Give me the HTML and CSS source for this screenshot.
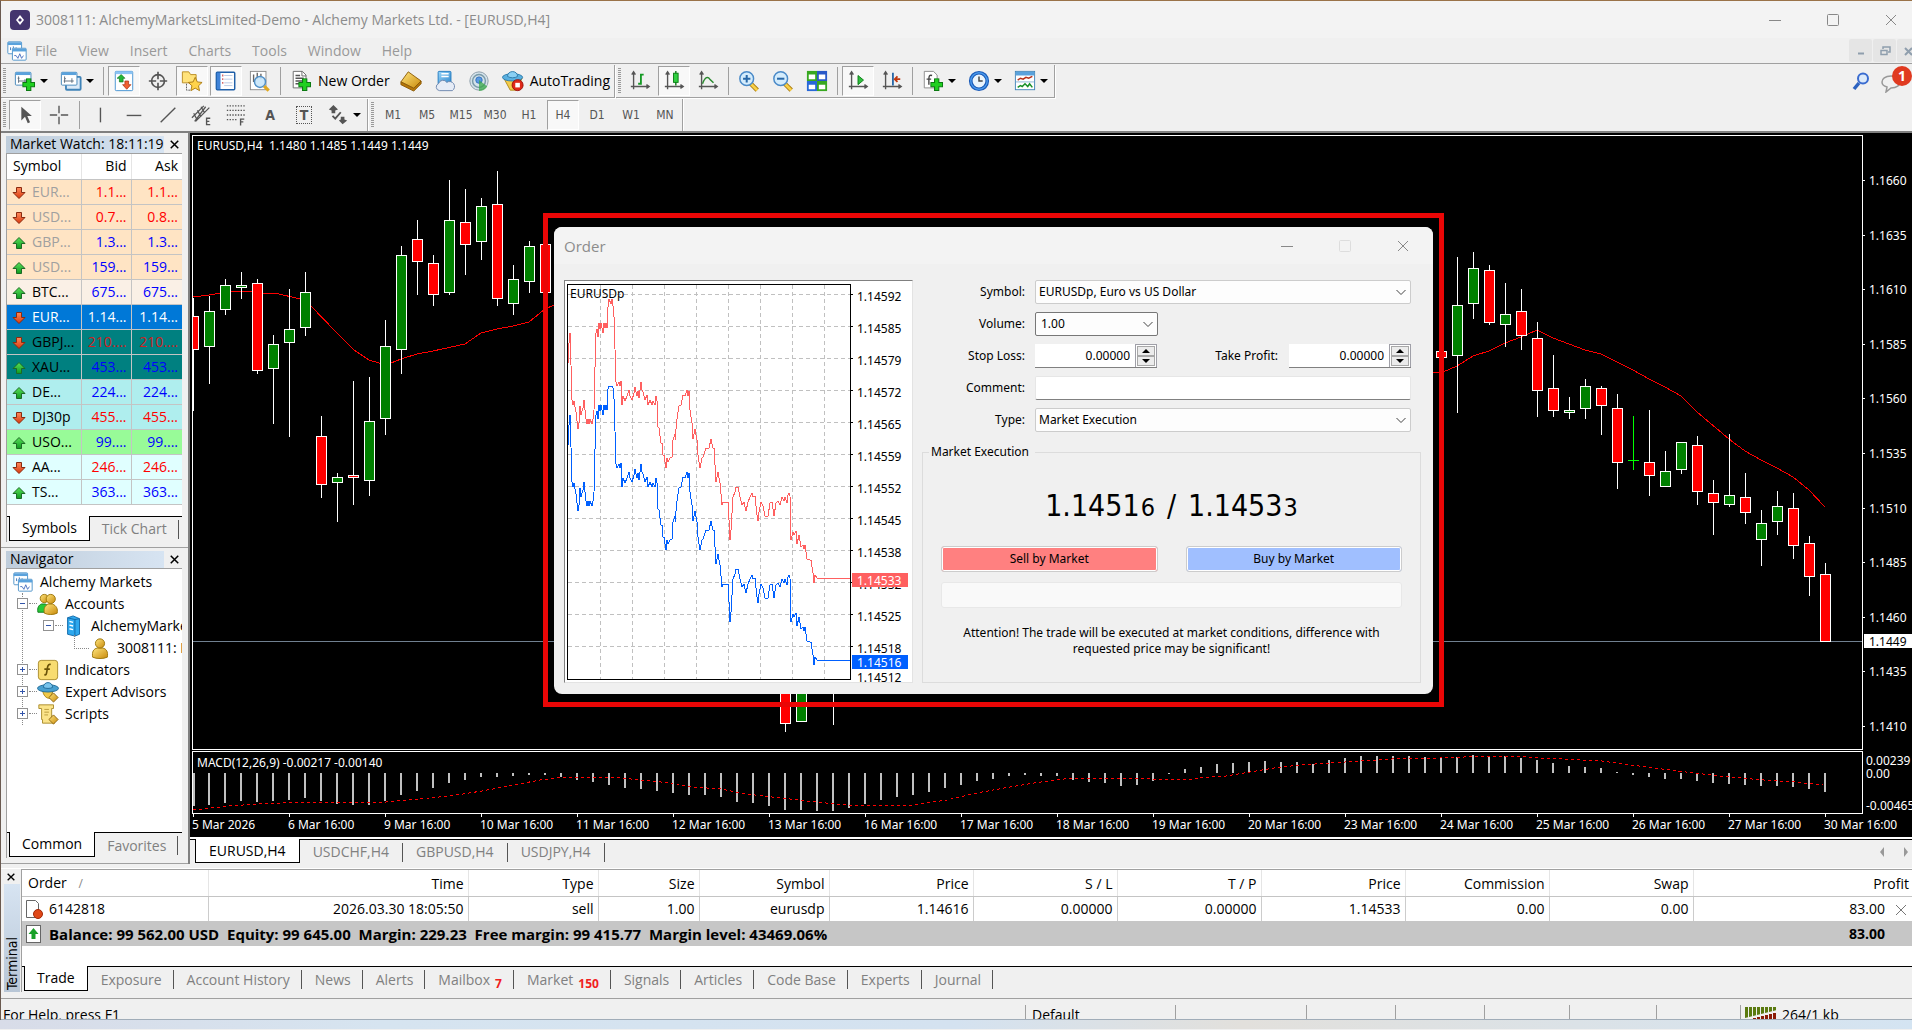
FILE: index.html
```html
<!DOCTYPE html>
<html lang="en">
<head>
<meta charset="utf-8">
<title>3008111: AlchemyMarketsLimited-Demo</title>
<link rel="stylesheet" href="styles.css">
</head>
<body>
<svg class="sprite" aria-hidden="true">
  <defs>
    <linearGradient id="g-red" x1="0" y1="0" x2="0" y2="1"><stop offset="0" stop-color="#ff8a5c"/><stop offset="1" stop-color="#d8380c"/></linearGradient>
    <linearGradient id="g-green" x1="0" y1="0" x2="0" y2="1"><stop offset="0" stop-color="#5be05b"/><stop offset="1" stop-color="#0f9a1f"/></linearGradient>
    <linearGradient id="g-gold" x1="0" y1="0" x2="1" y2="1"><stop offset="0" stop-color="#ffe680"/><stop offset="1" stop-color="#c98a0a"/></linearGradient>
    <linearGradient id="g-blue" x1="0" y1="0" x2="1" y2="1"><stop offset="0" stop-color="#9bd8fb"/><stop offset="1" stop-color="#2f86cc"/></linearGradient>
  </defs>
  <symbol id="down" viewBox="0 0 14 14"><path d="M4.500 1.500h5v5h3.500l-6 6-6-6h3.500z" fill="url(#g-red)" stroke="#8a2a10"/></symbol>
  <symbol id="up" viewBox="0 0 14 14"><path d="M4.500 12.500h5v-5h3.500l-6-6-6 6h3.500z" fill="url(#g-green)" stroke="#1c6a24"/></symbol>
  <symbol id="plus" viewBox="0 0 12 12"><path d="M4 .500h4v3.500h3.500v4h-3.500v3.500h-4v-3.500h-3.500v-4h3.500z" fill="#20d020" stroke="#0b7a12"/></symbol>
  <symbol id="charts" viewBox="0 0 24 24"><rect x="2" y="2" width="15" height="13" rx="1" fill="#fff" stroke="#4a90c8"/><path d="M2 4h15" stroke="#5aa2dc" stroke-width="3"/><path d="M5 8v3m3-4v4m3-3v2" stroke="#336fb8"/><rect x="7" y="9" width="15" height="13" rx="1" fill="#fff" stroke="#4a90c8"/><path d="M7 11h15" stroke="#5aa2dc" stroke-width="3"/><path d="M9 17h2l2 3 2-5 2 5 2-3" fill="none" stroke="#4870c0"/></symbol>
  <symbol id="newchart" viewBox="0 0 24 24"><rect x="1.500" y="2.500" width="17" height="14" rx="1" fill="#fff" stroke="#3f83b8"/><path d="M2 4h16" stroke="#5aa2dc" stroke-width="3"/><path d="M5 7v7m-1-5h2m-1 3h9m-2-2v4" stroke="#5a6a78" fill="none"/><use href="#plus" x="9" y="9" width="14" height="14"/></symbol>
  <symbol id="profiles" viewBox="0 0 24 24"><rect x="6.500" y="7.500" width="16" height="14" rx="1" fill="#dbeaf8" stroke="#3f83b8" stroke-width="2"/><rect x="1.500" y="2.500" width="17" height="14" rx="1" fill="#fff" stroke="#3f83b8"/><path d="M2 4h16" stroke="#5aa2dc" stroke-width="3"/><path d="M5 7v7m-1-2h11m-9-3v1m7-1v5" stroke="#5a6a78" fill="none"/></symbol>
  <symbol id="mwatch" viewBox="0 0 24 24"><rect x="2.500" y="1.500" width="19" height="21" rx="1" fill="#fff" stroke="#3f8fd0"/><path d="M3 3h18" stroke="#8cc4f4" stroke-width="3"/><path d="M7 13V9H4.500L9 5l4 4h-2v4z" fill="#22b838" stroke="#137a22" stroke-width=".8"/><path d="M13 12v4h-2.500l4.500 5 4.500-5H17v-4z" fill="#f06030" stroke="#a83010" stroke-width=".8"/></symbol>
  <symbol id="target" viewBox="0 0 24 24"><circle cx="12" cy="12" r="7" fill="none" stroke="#555" stroke-width="1.800"/><path d="M12 2v8m0 4v8M2 12h8m4 0h8" stroke="#555" stroke-width="1.800"/></symbol>
  <symbol id="star" viewBox="0 0 24 24"><path d="M1.500 2h7l2 3h6v9h-15z" fill="#ffe27a" stroke="#b88a20"/><path d="M6 15v7h5" fill="none" stroke="#555" stroke-dasharray="2 1"/><path d="M15.500 8l2.300 5 5.200.6-3.900 3.600 1.100 5.300-4.700-2.700-4.700 2.700 1.100-5.300L8 13.600l5.200-.6z" fill="#ffd34a" stroke="#a87810"/></symbol>
  <symbol id="terminal" viewBox="0 0 24 24"><rect x="1.500" y="2.500" width="20" height="19" rx="1" fill="#fff" stroke="#1f5fa8" stroke-width="1.600"/><path d="M4 3v18" stroke="#3f83d8" stroke-width="4"/><path d="M8 6h1m-1 4h1m-1 4h1" stroke="#c02020" stroke-width="2"/><path d="M10 6h9m-9 4h9m-9 4h9m-9 3h9" stroke="#b8c8e4"/></symbol>
  <symbol id="tester" viewBox="0 0 24 24"><rect x="1.500" y="1.500" width="17" height="20" fill="#fff" stroke="#888"/><path d="M5 5v8m4-10v7m4-6v6" stroke="#666" stroke-width="1.500"/><circle cx="12" cy="13" r="6" fill="#c8e6fa" fill-opacity=".9" stroke="#5090c8" stroke-width="1.600"/><path d="M16.500 17.500l5 5" stroke="#e0a820" stroke-width="3.500"/></symbol>
  <symbol id="neworder" viewBox="0 0 24 24"><path d="M3.500 1.500h10l4 4v14h-14z" fill="#fff" stroke="#666"/><path d="M13 1.500v5h4.500" fill="none" stroke="#666"/><path d="M6 6h5m-5 3h9m-9 3h9m-9 3h4" stroke="#555" stroke-width="1.500"/><use href="#plus" x="9" y="9" width="14" height="14"/></symbol>
  <symbol id="gold" viewBox="0 0 24 24"><path d="M9 2l14 10-8 8L1 13z" fill="url(#g-gold)" stroke="#8a5a08"/><path d="M1 13l14 7 8-8v3l-8 8L1 16z" fill="#b87808" stroke="#8a5a08"/></symbol>
  <symbol id="vps" viewBox="0 0 24 24"><rect x="4.500" y="1.500" width="14" height="14" rx="1" fill="url(#g-blue)" stroke="#1f78c0"/><path d="M8 4h8m-8 3h8" stroke="#fff" stroke-width="1.600"/><path d="M6 22.500a4 4 0 0 1-1-7.700 5 5 0 0 1 9-1.300 4.500 4.500 0 0 1 6 9z" fill="#e6ecf6" stroke="#6a84ac"/></symbol>
  <symbol id="signals" viewBox="0 0 24 24"><circle cx="12" cy="12" r="10" fill="#d4e2ea" stroke="#8a9aa6"/><circle cx="12" cy="12" r="7" fill="none" stroke="#7a9aa8" stroke-width="1.600"/><circle cx="12" cy="11" r="3.500" fill="#5a9ae0" stroke="#3070c0"/><path d="M12 11v12a11 11 0 0 0 9-5z" fill="#38a848" opacity=".75"/></symbol>
  <symbol id="autotrade" viewBox="0 0 24 24"><path d="M2 9l7 13h6l7-13z" fill="#f4cc4a" stroke="#b08818"/><ellipse cx="11.500" cy="8" rx="11" ry="4" fill="#5ab0e0" stroke="#2a78a8"/><path d="M6 7c0-7 11-7 11 0-3 2-8 2-11 0z" fill="#8ad0f4" stroke="#2a78a8"/><circle cx="17" cy="16.500" r="6" fill="#e02818" stroke="#981008"/><rect x="14.500" y="14" width="5" height="5" fill="#fff"/></symbol>
  <symbol id="axes" viewBox="0 0 24 24"><path d="M5 3v18m-3-3h19M3 5l2-3 2 3M19 16l3 2-3 2" fill="none" stroke="#555" stroke-width="1.500"/></symbol>
  <symbol id="bars" viewBox="0 0 24 24"><use href="#axes"/><path d="M10 15h3V5h3" fill="none" stroke="#159a25" stroke-width="2"/></symbol>
  <symbol id="candle" viewBox="0 0 24 24"><use href="#axes"/><path d="M14 1v16" stroke="#0a7a14" stroke-width="1.500"/><rect x="11.500" y="3.500" width="5" height="10" fill="#2fd040" stroke="#0a7a14"/></symbol>
  <symbol id="line" viewBox="0 0 24 24"><use href="#axes"/><path d="M6 15c3-8 6-8 8-5l4 4" fill="none" stroke="#2a8a30" stroke-width="1.600"/></symbol>
  <symbol id="lens" viewBox="0 0 24 24"><path d="M14 15l7 7" stroke="#a87808" stroke-width="5"/><path d="M14 15l7 7" stroke="#f8d048" stroke-width="3"/><circle cx="9.500" cy="9.500" r="7.500" fill="#d4ecfc" stroke="#4a8ac8" stroke-width="1.600"/></symbol>
  <symbol id="zoomin" viewBox="0 0 24 24"><use href="#lens"/><path d="M5.500 9.500h8m-4-4v8" stroke="#2868a8" stroke-width="2.200"/></symbol>
  <symbol id="zoomout" viewBox="0 0 24 24"><use href="#lens"/><path d="M5.500 9.500h8" stroke="#2868a8" stroke-width="2.200"/></symbol>
  <symbol id="tile" viewBox="0 0 24 24"><path d="M1 1h11v11H1z" fill="#38a820"/><path d="M12 1h11v11H12z" fill="#2858c8"/><path d="M1 12h11v11H1z" fill="#2868d8"/><path d="M12 12h11v11H12z" fill="#38a820"/><path d="M3 5h7v5H3zM14 5h7v5h-7zM3 16h7v5H3zM14 16h7v5h-7z" fill="#fff"/></symbol>
  <symbol id="scroll" viewBox="0 0 24 24"><use href="#axes"/><path d="M12 6l6 5-6 5z" fill="#2fc03f" stroke="#0a7a14"/></symbol>
  <symbol id="shift" viewBox="0 0 24 24"><use href="#axes"/><path d="M13 3v14" stroke="#2868a8" stroke-width="2"/><path d="M15 10h6m-3-3l-3 3 3 3" fill="none" stroke="#c03810" stroke-width="2"/></symbol>
  <symbol id="indic" viewBox="0 0 24 24"><path d="M2.500 1.500h10l4 4v14h-14z" fill="#fff" stroke="#888"/><path d="M11 6c-3-1-3.500 1-3.500 4v6M5 10h5" fill="none" stroke="#444" stroke-width="1.500"/><use href="#plus" x="9" y="9" width="14" height="14"/></symbol>
  <symbol id="clock" viewBox="0 0 24 24"><circle cx="12" cy="12" r="9" fill="#eaf4fc" stroke="#1a5ab8" stroke-width="4"/><circle cx="12" cy="12" r="9" fill="none" stroke="#4a9aec" stroke-width="1.500"/><path d="M12 7v5h4" fill="none" stroke="#444" stroke-width="1.600"/></symbol>
  <symbol id="template" viewBox="0 0 24 24"><rect x="1.500" y="1.500" width="21" height="20" fill="#fff" stroke="#3f83b8"/><path d="M2 4h20" stroke="#5aa2dc" stroke-width="4"/><path d="M4 11l3-2 3 1 3-2 3 1 4-2" fill="none" stroke="#b83018" stroke-width="1.600"/><path d="M2 13h20" stroke="#8ab4d4"/><path d="M4 19l3-2 2 1 3-3 3 3 2-3 3 4" fill="none" stroke="#189028" stroke-width="1.600"/></symbol>
  <symbol id="cursor" viewBox="0 0 24 24"><path d="M8 3v15l4-4 3 7 2.500-1-3-7h5z" fill="#555"/></symbol>
  <symbol id="cross" viewBox="0 0 24 24"><path d="M12 2v8m0 4v8M2 12h8m4 0h8" stroke="#555" stroke-width="1.500"/></symbol>
  <symbol id="vline" viewBox="0 0 24 24"><path d="M12.500 4v16" stroke="#555" stroke-width="1.500"/></symbol>
  <symbol id="hline" viewBox="0 0 24 24"><path d="M4 12.500h16" stroke="#555" stroke-width="1.500"/></symbol>
  <symbol id="trend" viewBox="0 0 24 24"><path d="M4 20L20 4" stroke="#555" stroke-width="1.500"/></symbol>
  <symbol id="channel" viewBox="0 0 24 24"><path d="M1 15L14 2M5 19L20 4M3 10l3 6m1-9l4 7m0-11l4 7M4 19L16 3" stroke="#555" stroke-width="1.400"/><path d="M21 15.500h-4v7h4m-4-3.500h3" fill="none" stroke="#555" stroke-width="1.500"/></symbol>
  <symbol id="fibo" viewBox="0 0 24 24"><path d="M2 2h20M2 7h20M2 12h20M2 17h12" stroke="#555" stroke-width="1.500" stroke-dasharray="1.500 1.500"/><path d="M21 16.500h-4v7m0-4h3" fill="none" stroke="#555" stroke-width="1.500"/></symbol>
  <symbol id="shapes" viewBox="0 0 24 24"><path d="M7 1l5 5-3 1v3H5V7L2 6zM17 22l-4-4 2-1v-3h4v3l3 1z" fill="#555"/><path d="M6 13l3 3 6-7" fill="none" stroke="#555" stroke-width="2"/></symbol>
  <symbol id="person" viewBox="0 0 24 24"><path d="M4 22c-1-6 1-9 5-10h6c4 1 6 4 5 10-4 2-12 2-16 0z" fill="url(#g-gold)" stroke="#9a7408"/><circle cx="12" cy="7" r="5" fill="url(#g-gold)" stroke="#9a7408"/></symbol>
  <symbol id="people" viewBox="0 0 24 24"><path d="M1 21c-1-5 1-8 4-9h4c3 1 4 4 4 9z" fill="#28c838" stroke="#0f7a1c"/><circle cx="8" cy="6" r="4.500" fill="url(#g-gold)" stroke="#9a7408"/><path d="M8 22c-1-6 1-8 4-10h5c4 2 6 5 5 10-4 2-10 2-14 0z" fill="url(#g-gold)" stroke="#9a7408"/><circle cx="15" cy="6.500" r="5" fill="url(#g-gold)" stroke="#9a7408"/></symbol>
  <symbol id="server" viewBox="0 0 24 24"><path d="M5 3l6-2 7 3v17l-5 2-8-2z" fill="#2ea8ee" stroke="#0f68a8"/><path d="M5 3l8 2v18M13 5l5-1" fill="none" stroke="#0f68a8"/><path d="M7 7l4 1m-4 3l4 1m-4 3l4 1" stroke="#fff" stroke-width="1.500"/></symbol>
  <symbol id="func" viewBox="0 0 24 24"><rect x="1.500" y="1.500" width="21" height="21" rx="3" fill="#f8dc70" stroke="#a88a28"/><path d="M15 6c-3-1-3.500 2-4 6s-1 6-3 5M8 11h6" fill="none" stroke="#6a5208" stroke-width="1.800"/></symbol>
  <symbol id="expert" viewBox="0 0 24 24"><path d="M6 10c1 6 4 9 8 9l4-9z" fill="#f0c848" stroke="#a88010"/><ellipse cx="12" cy="8" rx="11.500" ry="4" fill="#48a0d0" stroke="#1f6a98"/><path d="M7 7c0-7 10-7 10 0-3 1.500-7 1.500-10 0z" fill="#78c4ec" stroke="#1f6a98"/><path d="M18 13l5 5-5 5-5-5z" fill="url(#g-gold)" stroke="#8a6008"/></symbol>
  <symbol id="scripts" viewBox="0 0 24 24"><path d="M2 2h16v4h-2v12h3v4H6v-4H5V6H2z" fill="#fbe48a" stroke="#a88a28"/><path d="M8 7h5m-5 3h5m-5 3h4" stroke="#b89838"/><path d="M18 13l5 5-5 5-5-5z" fill="url(#g-gold)" stroke="#8a6008"/></symbol>
  <symbol id="x" viewBox="0 0 12 12"><path d="M1 1l10 10M11 1L1 11" stroke="currentColor" fill="none"/></symbol>
  <symbol id="min" viewBox="0 0 12 12"><path d="M0 6.500h12" stroke="currentColor"/></symbol>
  <symbol id="max" viewBox="0 0 12 12"><rect x=".5" y=".5" width="11" height="11" rx="1" fill="none" stroke="currentColor"/></symbol>
  <symbol id="chev" viewBox="0 0 12 12"><path d="M1.500 4l4.500 4.500L10.500 4" fill="none" stroke="#444"/></symbol>
</svg>

<div class="window">
  <header class="titlebar">
    <svg class="app-icon" viewBox="0 0 20 20"><rect width="20" height="20" rx="4" fill="#43356e"/><path d="M10 5l4 5-4 5-4-5z" fill="#fff"/><path d="M10 8l2 2-2 2-2-2z" fill="#43356e"/></svg>
    <h1>3008111: AlchemyMarketsLimited-Demo - Alchemy Markets Ltd. - [EURUSD,H4]</h1>
    <div class="win-buttons">
      <button aria-label="Minimize"><svg><use href="#min"/></svg></button>
      <button aria-label="Maximize"><svg><use href="#max"/></svg></button>
      <button aria-label="Close"><svg><use href="#x"/></svg></button>
    </div>
  </header>

  <nav class="menubar">
    <svg class="menu-icon"><use href="#charts"/></svg>
    <button>File</button><button>View</button><button>Insert</button><button>Charts</button><button>Tools</button><button>Window</button><button>Help</button>
    <div class="mdi-buttons">
      <button aria-label="Minimize chart"><svg viewBox="0 0 12 12"><path d="M3 8.500h6" stroke="#8f9ead" stroke-width="2"/></svg></button>
      <button aria-label="Restore chart"><svg viewBox="0 0 12 12"><path d="M4 4V2h7v5H9M2 5.500h6v4H2z" fill="none" stroke="#8f9ead" stroke-width="1.500"/></svg></button>
      <button aria-label="Close chart"><svg viewBox="0 0 12 12"><path d="M2 3l7 7M9 3l-7 7" stroke="#8f9ead" stroke-width="2"/></svg></button>
    </div>
  </nav>

  <div class="toolbar">
    <div class="group framed">
      <i class="grip"></i>
      <button class="tool drop" aria-label="New chart"><svg><use href="#newchart"/></svg></button>
      <button class="tool drop" aria-label="Profiles"><svg><use href="#profiles"/></svg></button>
      <i class="sep"></i>
      <button class="tool on" aria-label="Market Watch"><svg><use href="#mwatch"/></svg></button>
      <button class="tool" aria-label="Data Window"><svg><use href="#target"/></svg></button>
      <button class="tool on" aria-label="Navigator"><svg><use href="#star"/></svg></button>
      <button class="tool on" aria-label="Terminal"><svg><use href="#terminal"/></svg></button>
      <button class="tool" aria-label="Strategy Tester"><svg><use href="#tester"/></svg></button>
      <i class="sep"></i>
      <button class="tool text"><svg><use href="#neworder"/></svg>New Order</button>
      <button class="tool" aria-label="MetaEditor"><svg><use href="#gold"/></svg></button>
      <button class="tool" aria-label="VPS"><svg><use href="#vps"/></svg></button>
      <button class="tool" aria-label="Signals"><svg><use href="#signals"/></svg></button>
      <button class="tool text"><svg><use href="#autotrade"/></svg>AutoTrading</button>
    </div>
    <div class="group framed">
      <i class="grip"></i>
      <button class="tool" aria-label="Bar chart"><svg><use href="#bars"/></svg></button>
      <button class="tool on" aria-label="Candlesticks"><svg><use href="#candle"/></svg></button>
      <button class="tool" aria-label="Line chart"><svg><use href="#line"/></svg></button>
      <i class="sep"></i>
      <button class="tool" aria-label="Zoom in"><svg><use href="#zoomin"/></svg></button>
      <button class="tool" aria-label="Zoom out"><svg><use href="#zoomout"/></svg></button>
      <button class="tool" aria-label="Tile windows"><svg><use href="#tile"/></svg></button>
      <i class="sep"></i>
      <button class="tool on" aria-label="Auto scroll"><svg><use href="#scroll"/></svg></button>
      <button class="tool" aria-label="Chart shift"><svg><use href="#shift"/></svg></button>
      <i class="sep"></i>
      <button class="tool drop" aria-label="Indicators"><svg><use href="#indic"/></svg></button>
      <button class="tool drop" aria-label="Periods"><svg><use href="#clock"/></svg></button>
      <button class="tool drop" aria-label="Templates"><svg><use href="#template"/></svg></button>
    </div>
    <div class="toolbar-end">
      <button aria-label="Search"><svg width="20" height="20" viewBox="0 0 20 20"><path d="M3 17l5-6" stroke="#2c62c0" stroke-width="3.500"/><circle cx="12" cy="6.500" r="5" fill="#dceafa" stroke="#3a6cd0" stroke-width="2"/></svg></button>
      <button class="chat" aria-label="Messages"><svg width="22" height="22" viewBox="0 0 22 22"><path d="M11 5c6 0 9 3 9 6s-3 6-9 6l-5 4 1-5c-4-1-5-3-5-5 0-3 3-6 9-6z" fill="#f0f0f0" stroke="#999" stroke-width="1.500"/></svg><span class="badge">1</span></button>
    </div>
  </div>

  <div class="toolbar second">
    <div class="group">
      <i class="grip"></i>
      <button class="tool on" aria-label="Cursor"><svg><use href="#cursor"/></svg></button>
      <button class="tool" aria-label="Crosshair"><svg><use href="#cross"/></svg></button>
      <i class="sep"></i>
      <button class="tool" aria-label="Vertical line"><svg><use href="#vline"/></svg></button>
      <button class="tool" aria-label="Horizontal line"><svg><use href="#hline"/></svg></button>
      <button class="tool" aria-label="Trendline"><svg><use href="#trend"/></svg></button>
      <button class="tool" aria-label="Channel"><svg><use href="#channel"/></svg></button>
      <button class="tool" aria-label="Fibonacci"><svg><use href="#fibo"/></svg></button>
      <button class="tool letter">A</button>
      <button class="tool letter" aria-label="Text label"><span class="boxed">T</span></button>
      <button class="tool drop" aria-label="Arrows"><svg><use href="#shapes"/></svg></button>
    </div>
    <div class="group">
      <i class="grip"></i>
      <button class="tool period">M1</button><button class="tool period">M5</button><button class="tool period">M15</button><button class="tool period">M30</button><button class="tool period">H1</button><button class="tool period on">H4</button><button class="tool period">D1</button><button class="tool period">W1</button><button class="tool period">MN</button>
    </div>
  </div>

  <main class="workspace">
    <aside class="side">
      <section class="panel">
        <div class="panel-title"><h2>Market Watch: 18:11:19</h2><button aria-label="Close Market Watch"><svg><use href="#x"/></svg></button></div>
        <div class="panel-body">
          <table class="quotes">
            <thead><tr><th>Symbol</th><th>Bid</th><th>Ask</th></tr></thead>
            <tbody>
              <tr class="bisque muted dn"><td><svg><use href="#down"/></svg>EUR...</td><td>1.1...</td><td>1.1...</td></tr>
              <tr class="bisque muted dn"><td><svg><use href="#down"/></svg>USD...</td><td>0.7...</td><td>0.8...</td></tr>
              <tr class="bisque muted"><td><svg><use href="#up"/></svg>GBP...</td><td>1.3...</td><td>1.3...</td></tr>
              <tr class="bisque muted"><td><svg><use href="#up"/></svg>USD...</td><td>159...</td><td>159...</td></tr>
              <tr class="linen"><td><svg><use href="#up"/></svg>BTC...</td><td>675...</td><td>675...</td></tr>
              <tr class="selected"><td><svg><use href="#down"/></svg>EUR...</td><td>1.14...</td><td>1.14...</td></tr>
              <tr class="teal dn"><td><svg><use href="#down"/></svg>GBPJ...</td><td>210....</td><td>210....</td></tr>
              <tr class="teal"><td><svg><use href="#up"/></svg>XAU...</td><td>453...</td><td>453...</td></tr>
              <tr class="turq"><td><svg><use href="#up"/></svg>DE...</td><td>224...</td><td>224...</td></tr>
              <tr class="turq dn"><td><svg><use href="#down"/></svg>DJ30p</td><td>455...</td><td>455...</td></tr>
              <tr class="palegreen"><td><svg><use href="#up"/></svg>USO...</td><td>99....</td><td>99....</td></tr>
              <tr class="cyan dn"><td><svg><use href="#down"/></svg>AA...</td><td>246...</td><td>246...</td></tr>
              <tr class="cyan"><td><svg><use href="#up"/></svg>TS...</td><td>363...</td><td>363...</td></tr>
            </tbody>
          </table>
          <div class="tabs"><button class="tab active">Symbols</button><button class="tab">Tick Chart</button></div>
        </div>
      </section>
      <section class="panel grow">
        <div class="panel-title"><h2>Navigator</h2><button aria-label="Close Navigator"><svg><use href="#x"/></svg></button></div>
        <div class="panel-body">
          <ul class="tree">
            <li class="l0"><svg><use href="#charts"/></svg>Alchemy Markets</li>
            <li class="l1"><b class="toggle minus"></b><svg><use href="#people"/></svg>Accounts</li>
            <li class="l2"><b class="toggle minus"></b><svg><use href="#server"/></svg>AlchemyMarketsLimited-Demo</li>
            <li class="l3"><svg><use href="#person"/></svg>3008111: Demo</li>
            <li class="l1"><b class="toggle"></b><svg><use href="#func"/></svg>Indicators</li>
            <li class="l1"><b class="toggle"></b><svg><use href="#expert"/></svg>Expert Advisors</li>
            <li class="l1"><b class="toggle"></b><svg><use href="#scripts"/></svg>Scripts</li>
          </ul>
          <div class="tabs"><button class="tab active">Common</button><button class="tab">Favorites</button></div>
        </div>
      </section>
    </aside>

    <section class="chart-pane">
      <svg class="chart" id="chart" role="img" aria-label="EURUSD H4 candlestick chart"></svg>
      <div class="tabs chart-tabs">
        <button class="tab active">EURUSD,H4</button><button class="tab">USDCHF,H4</button><button class="tab">GBPUSD,H4</button><button class="tab">USDJPY,H4</button>
        <svg class="tab-scroll" viewBox="0 0 32 12"><path d="M6 1v10L2 6zM26 1v10l4-5z" fill="#999"/></svg>
      </div>

      <div class="highlight"></div>
      <section class="dialog" role="dialog" aria-labelledby="dlg-title">
        <header class="dialog-title">
          <h2 id="dlg-title">Order</h2>
          <div class="win-buttons">
            <button aria-label="Minimize"><svg><use href="#min"/></svg></button>
            <button aria-label="Maximize" disabled><svg><use href="#max"/></svg></button>
            <button aria-label="Close"><svg><use href="#x"/></svg></button>
          </div>
        </header>
        <div class="dialog-body">
          <svg class="ticks" id="ticks" role="img" aria-label="EURUSDp tick chart"></svg>
          <form class="order">
            <div class="fields">
              <label for="symbol">Symbol:</label>
              <span class="select"><select id="symbol"><option>EURUSDp, Euro vs US Dollar</option></select><svg><use href="#chev"/></svg></span>
              <label for="volume">Volume:</label>
              <span class="select short"><select id="volume"><option>1.00</option></select><svg><use href="#chev"/></svg></span>
              <label for="sl">Stop Loss:</label>
              <div class="pair">
                <span class="spin"><input id="sl" type="text" value="0.00000"><span class="arrows"><button type="button" aria-label="Increase"></button><button type="button" class="dec" aria-label="Decrease"></button></span></span>
                <label for="tp">Take Profit:</label>
                <span class="spin"><input id="tp" type="text" value="0.00000"><span class="arrows"><button type="button" aria-label="Increase"></button><button type="button" class="dec" aria-label="Decrease"></button></span></span>
              </div>
              <label for="comment">Comment:</label>
              <input id="comment" class="line-input" type="text">
              <label for="type">Type:</label>
              <span class="select"><select id="type"><option>Market Execution</option></select><svg><use href="#chev"/></svg></span>
            </div>
            <fieldset>
              <legend>Market Execution</legend>
              <p class="price">1.1451<small>6</small><span class="slash">/</span>1.1453<small>3</small></p>
              <div class="deal"><button type="button" class="sell">Sell by Market</button><button type="button" class="buy">Buy by Market</button></div>
              <button type="button" class="blank" disabled aria-label="Close position"></button>
              <p class="note">Attention! The trade will be executed at market conditions, difference with requested price may be significant!</p>
            </fieldset>
          </form>
        </div>
      </section>
    </section>
  </main>

  <section class="terminal">
    <div class="terminal-side"><button aria-label="Close Terminal"><svg><use href="#x"/></svg></button><h2>Terminal</h2></div>
    <div class="terminal-main">
      <table class="trades">
        <colgroup><col class="c-order"><col class="c-time"><col class="c-type"><col class="c-size"><col class="c-symbol"><col class="c-num"><col class="c-num"><col class="c-num"><col class="c-num"><col class="c-num"><col class="c-num"><col></colgroup>
        <thead><tr><th>Order <span class="sort">/</span></th><th>Time</th><th>Type</th><th>Size</th><th>Symbol</th><th>Price</th><th>S / L</th><th>T / P</th><th>Price</th><th>Commission</th><th>Swap</th><th>Profit</th></tr></thead>
        <tbody>
          <tr><td><svg class="row-icon" viewBox="0 0 18 20"><path d="M1.500 1.500h9l3 3v14h-12z" fill="#fff" stroke="#666"/><circle cx="13" cy="15" r="4.500" fill="#e04818" stroke="#a02808"/></svg>6142818</td><td>2026.03.30 18:05:50</td><td>sell</td><td>1.00</td><td>eurusdp</td><td>1.14616</td><td>0.00000</td><td>0.00000</td><td>1.14533</td><td>0.00</td><td>0.00</td><td>83.00<button class="close-trade" aria-label="Close trade"><svg><use href="#x"/></svg></button></td></tr>
          <tr class="total"><td colspan="11"><svg class="row-icon" viewBox="0 0 18 20"><rect x="1.500" y="1.500" width="14" height="17" fill="#fff" stroke="#666"/><path d="M8.500 4l5 6h-3v5h-4v-5h-3z" fill="#18a028"/></svg>Balance: 99 562.00 USD&nbsp; Equity: 99 645.00&nbsp; Margin: 229.23&nbsp; Free margin: 99 415.77&nbsp; Margin level: 43469.06%</td><td>83.00</td></tr>
        </tbody>
      </table>
      <div class="tabs terminal-tabs">
        <button class="tab active">Trade</button><button class="tab">Exposure</button><button class="tab">Account History</button><button class="tab">News</button><button class="tab">Alerts</button><button class="tab">Mailbox<sub>7</sub></button><button class="tab">Market<sub>150</sub></button><button class="tab">Signals</button><button class="tab">Articles</button><button class="tab">Code Base</button><button class="tab">Experts</button><button class="tab">Journal</button>
      </div>
    </div>
  </section>

  <footer class="status">
    <span class="help">For Help, press F1</span><span>Default</span><span></span><span></span><span></span><span></span><span></span><span></span>
    <span class="traffic"><svg width="32" height="20" viewBox="0 0 32 20"><path d="M0 10h32" stroke="#5a7a10" stroke-width="20" stroke-dasharray="3 1"/><path d="M0 11L32 3v17H0z" fill="#f0f0f0"/><path d="M1.500 20v-7m4 7v-8m4 8v-9m4 9v-10m4 10v-11m4 11v-12m4 12v-13m4 13v-14" stroke="#8c1c08" stroke-width="3"/></svg>264/1 kb</span>
  </footer>
</div>
<div class="desktop"></div>
<script src="app.js"></script>
</body>
</html>
```
FILE: styles.css
```css
* { box-sizing: border-box; }

body {
  margin: 0;
  background: #f0f0f0;
  color: #000;
  font: 14px/20px "Open Sans", "Noto Sans", sans-serif;
  overflow-x: hidden;
}

h1, h2, p, ul { margin: 0; padding: 0; font-weight: 400; }
button, input, select { font: inherit; color: inherit; margin: 0; }
button { background: none; border: 0; padding: 0; }
svg { display: block; }
.sprite { position: absolute; width: 0; height: 0; }

.window { border-top: 1px solid #9a7248; border-left: 1px solid #6a5a50; overflow: hidden; }

/* Title bar and menu */
.titlebar { display: flex; align-items: center; height: 37px; padding-left: 9px; background: #f3f3f3; color: #8c8c8c; }
.titlebar h1 { flex: 1; margin-left: 6px; font-size: 14px; line-height: 36px; }
.app-icon { width: 20px; height: 20px; }
.win-buttons { display: flex; color: #888; }
.win-buttons button { width: 58px; height: 36px; display: grid; place-items: center; }
.win-buttons svg { width: 12px; height: 12px; }
.titlebar .win-buttons { margin-right: -8px; }

.menubar { display: flex; align-items: center; height: 27px; padding: 0 0 2px 5px; background: linear-gradient(#a0a0a0, #a0a0a0) 0 25px / 100% 1px no-repeat, #f0f0f0; color: #999; }
.menu-icon { width: 22px; height: 22px; }
.menubar > button { padding: 0 11px 0 10px; font-size: 14px; }
.menubar > .menu-icon + button { padding-left: 7px; }
.mdi-buttons { display: flex; gap: 1px; margin-left: auto; margin-right: -8px; }
.mdi-buttons button { width: 23px; height: 23px; border-radius: 2px; background: #e5e5e5; display: grid; place-items: center; }
.mdi-buttons svg { width: 12px; height: 12px; }

/* Toolbars */
.toolbar { display: flex; height: 34px; }
.toolbar.second { height: 34px; border-bottom: 2px solid #808080; }
.group { display: flex; align-items: center; padding: 0 0 0 2px; border-right: 1px solid #a0a0a0; box-shadow: 1px 0 #fff; margin-right: 1px; }
.group.framed { border-bottom: 1px solid #a0a0a0; height: 33px; box-shadow: 1px 1px #fff; }
.grip { width: 3px; height: 26px; margin-right: 2px; background: repeating-linear-gradient(#999 0 1px, #f0f0f0 1px 2px); }
.sep { width: 1px; height: 28px; margin: 0 3px; background: #a0a0a0; }
.tool { position: relative; width: 32px; height: 30px; margin: 0 1px; display: flex; align-items: center; justify-content: center; }
.tool svg { width: 22px; height: 22px; flex: none; }
.tool.on { border: 1px solid; border-color: #a0a0a0 #fff #fff #a0a0a0; background: #f8f8f8; }
.tool.drop { width: 44px; justify-content: flex-start; padding-left: 5px; }
.tool.drop::after { content: ""; margin-left: 4px; border: 4px solid transparent; border-top-color: #000; border-bottom: 0; }
.tool.text { width: auto; gap: 6px; padding: 0 3px 0 5px; white-space: nowrap; }
.tool.period, .tool.letter { color: #555; font: 12px/16px "DejaVu Sans Condensed", "DejaVu Sans", sans-serif; }
.tool.letter { font-size: 14px; font-weight: 700; }
.boxed { width: 16px; border: 1px dotted #555; }
.toolbar-end { display: flex; align-items: center; gap: 9px; margin-left: auto; padding-right: 10px; }
.chat { position: relative; }
.badge { position: absolute; left: 12px; top: -5px; width: 20px; height: 20px; border-radius: 10px; background: #e03a20; color: #fff; font-weight: 700; line-height: 20px; }

/* Side panels */
.workspace { display: grid; grid-template-columns: 189px minmax(0, 1fr); }
.side { display: flex; flex-direction: column; border-right: 2px solid #808080; }
.panel { display: flex; flex-direction: column; padding: 3px 6px 5px 5px; border-bottom: 1px solid #a0a0a0; }
.panel.grow { flex: 1; }
.panel-title { display: flex; justify-content: space-between; height: 17px; }
.panel-title h2 { width: 158px; padding-left: 4px; font-size: 14px; line-height: 16px; white-space: nowrap; background: linear-gradient(90deg, #bfcddb, #d7e4f2); }
.panel-title button { width: 16px; display: grid; place-items: center; }
.panel-title svg { width: 9px; height: 9px; stroke-width: 2; }
.panel-body { flex: 1; display: flex; flex-direction: column; background: #fff; border: solid #a0a0a0; border-width: 1px 0 0 1px; overflow: hidden; }
.tabs { display: flex; margin-top: auto; border-top: 1px solid #000; background: #f0f0f0; color: #808080; }
.tab { height: 25px; padding: 0 13px; line-height: 24px; position: relative; white-space: nowrap; }
.tab:not(.active)::after { content: ""; position: absolute; right: 0; top: 3px; height: 19px; border-right: 1px solid #555; }
.tab.active { margin: -1px 0 0 2px; background: #fff; color: #000; border: solid #000; border-width: 0 1px 1px; }
.panel .tab { padding: 0 12px; }

.quotes { width: 100%; border-collapse: collapse; table-layout: fixed; margin-bottom: 11px; }
.quotes th, .quotes td { height: 25px; padding: 0 4px 0 0; border: 1px solid #c4c4c4; border-top: 0; text-align: right; font-weight: 400; line-height: 20px; overflow: hidden; white-space: nowrap; }
.quotes th { border-right-color: #e5e5e5; }
.quotes th:first-child { width: 74px; padding-left: 6px; }
.quotes th:nth-child(2) { width: 50px; }
.quotes tr > :first-child { border-left: 0; text-align: left; }
.quotes tr > :last-child { border-right: 0; }
.quotes td { color: #00f; }
.quotes td:first-child { padding-left: 5px; color: #000; }
.quotes td svg { float: left; width: 14px; height: 14px; margin: 4px 6px 0 0; }
.quotes .dn td + td { color: #f00; }
.quotes .muted td:first-child { color: #a0a0a0; }
.bisque { background: #ffe4c4; }
.linen { background: #faf0e6; }
.teal { background: #008080; }
.turq { background: #afeeee; }
.palegreen { background: #98fb98; }
.cyan { background: #e0ffff; }
.quotes .selected td { background: #0078d7; color: #fff; }
.quotes .teal.dn td + td { color: #d02020; }

.tree { position: relative; list-style: none; padding-top: 2px; }
.tree::before { content: ""; position: absolute; left: 15px; top: 24px; height: 132px; border-left: 1px dotted #888; }
.tree li { display: flex; align-items: center; height: 22px; gap: 6px; white-space: nowrap; position: relative; }
.tree li svg { width: 22px; height: 22px; flex: none; }
.tree .l0 { padding-left: 5px; }
.tree .l1 { padding-left: 10px; }
.tree .l2 { padding-left: 36px; }
.tree .l3 { padding-left: 82px; }
.tree .l3::before { content: ""; position: absolute; left: 67px; top: -2px; width: 14px; height: 13px; border: dotted #888; border-width: 0 0 1px 1px; }
.toggle { position: relative; flex: none; width: 11px; height: 11px; margin-right: 3px; background: linear-gradient(#3355aa, #3355aa) 2px 4px / 5px 1px no-repeat, linear-gradient(#3355aa, #3355aa) 4px 2px / 1px 5px no-repeat, #fff; border: 1px solid #919191; }
.toggle.minus { background: linear-gradient(#3355aa, #3355aa) 2px 4px / 5px 1px no-repeat, #fff; }
.toggle::after { content: ""; position: absolute; left: 11px; top: 4px; width: 8px; border-top: 1px dotted #888; }

/* Chart */
.chart-pane { position: relative; background: #fff; overflow: hidden; }
.chart { width: 100%; height: 704px; background: #000; margin-bottom: 2px; }
.chart text, .ticks text { font: 12px "Noto Sans", sans-serif; }
.chart-tabs { padding-left: 3px; }
.chart-tabs .tab { height: 24px; }
.chart-tabs .tab:not(.active) { padding-right: 14px; }
.tab-scroll { width: 32px; height: 12px; margin: 6px 2px 0 auto; }
.highlight { position: absolute; left: 353px; top: 80px; width: 901px; height: 494px; border: 5px solid #ea0606; }

/* Order dialog */
.dialog { position: absolute; left: 364px; top: 94px; width: 879px; border-radius: 8px; background: #f0f0f0; overflow: hidden; font: 12px/16px "Noto Sans", sans-serif; }
.dialog-title { display: flex; align-items: center; justify-content: space-between; height: 37px; padding: 0 1px 0 10px; background: #f3f3f3; color: #8c8c8c; font: 14px/20px "Open Sans", sans-serif; }
.dialog-title h2 { font-size: 15px; }
.dialog-title button:disabled { color: #ddd; }
.dialog-body { display: grid; grid-template-columns: 349px 1fr; gap: 9px; padding: 16px 12px 11px 10px; }
.ticks { width: 349px; height: 403px; background: #fff; border: 1px solid; border-color: #808080 #e3e3e3 #e3e3e3 #808080; }
.order { display: flex; flex-direction: column; }
.fields { display: grid; grid-template-columns: 103px 1fr; grid-auto-rows: 24px; gap: 8px 10px; padding-right: 10px; align-items: center; }
.fields label { text-align: right; }
.select { position: relative; display: block; height: 24px; }
.select.short { width: 123px; }
.select select { width: 100%; height: 24px; padding: 0 3px; appearance: none; background: #fdfdfd; border: 1px solid #ccc; border-radius: 2px; }
.select.short select { padding-left: 5px; border-color: #777; }
.select svg { position: absolute; right: 4px; top: 6px; width: 12px; height: 12px; pointer-events: none; }
.pair { display: flex; justify-content: space-between; align-items: center; }
.pair label { margin-left: auto; margin-right: 11px; }
.spin { display: flex; width: 122px; height: 24px; border-bottom: 1px solid #808080; background: #fff; }
.spin input { flex: 1; min-width: 0; border: 0; padding: 0 5px; text-align: right; background: none; }
.arrows { width: 22px; display: flex; flex-direction: column; border: 1px solid #a0a0a8; border-bottom: 0; padding: 1px; }
.arrows button { flex: 1; border: 1px solid #a8a8a8; background: #ececec; display: grid; place-items: center; }
.arrows button::before { content: ""; border: 4px solid transparent; border-bottom-color: #000; border-top: 0; }
.arrows .dec::before { border: 4px solid transparent; border-top-color: #000; border-bottom: 0; }
.line-input { height: 24px; border: 1px solid #e6e6e6; border-bottom-color: #808080; border-radius: 2px; background: #fff; }
fieldset { flex: 1; min-width: 0; margin: 12px 0 0; padding: 26px 18px 0; border: 1px solid #dcdcdc; }
legend { margin-left: -12px; padding: 0 6px 0 2px; }
.price { font: 30px/40px "DejaVu Sans Condensed", "DejaVu Sans", sans-serif; text-align: center; margin-bottom: 18px; }
.price small { font-size: 25px; margin-left: 1px; }
.slash { margin: 0 12px; }
.deal { display: grid; grid-template-columns: 1fr 1fr; gap: 28px; }
.deal button { height: 26px; border: 1px solid #ccc; border-radius: 3px; box-shadow: inset 0 0 0 1px #fff; }
.sell { background: #ff8080; }
.buy { background: #a0bfff; }
.blank { display: block; width: 100%; height: 26px; margin: 10px 0 17px; border: 1px solid #e8e8e8; border-radius: 3px; background: #f9f9f9; }
.note { width: 440px; margin: 0 auto; text-align: center; }

/* Terminal */
.terminal { display: flex; margin-top: 4px; padding-bottom: 6px; border-bottom: 1px solid #a0a0a0; border-top: 1px solid #fff; }
.terminal-side { display: flex; flex-direction: column; width: 20px; padding-left: 3px; }
.terminal-side button { height: 15px; width: 14px; display: grid; place-items: center; }
.terminal-side button svg { width: 8px; height: 8px; stroke-width: 2; }
.terminal-side h2 { flex: 1; width: 16px; writing-mode: vertical-rl; transform: rotate(180deg); padding-top: 2px; font: 14px/16px "DejaVu Sans Condensed", "DejaVu Sans", sans-serif; background: linear-gradient(#b8c6d6, #d7e4f2); }
.terminal-main { flex: 1; min-width: 0; background: #fff; border: solid #a0a0a0; border-width: 1px 0 0 1px; }
.trades { width: 100%; table-layout: fixed; border-collapse: collapse; margin-bottom: 20px; }
.trades th, .trades td { height: 25px; padding: 0 4px; text-align: right; font-weight: 400; line-height: 20px; white-space: nowrap; border-right: 1px solid #ccc; }
.trades th { height: 26px; padding-top: 2px; border-color: #e5e5e5; border-bottom: 1px solid #c4c4c4; }
.trades tr > :first-child { text-align: left; padding-left: 6px; }
.trades tr > :last-child { border-right: 0; padding-right: 3px; }
.trades tbody tr > :last-child { padding-right: 27px; }
.trades td { position: relative; }
.trades tbody tr > :first-child { padding-left: 3px; }
.trades .total td { background: #c6c6c6; border: 0; font-size: 15px; font-weight: 700; }
.trades .total td:last-child { font-size: 14px; }
.row-icon { float: left; width: 18px; height: 20px; margin-right: 6px; }
.sort { margin-left: 8px; color: #888; font-size: 12px; }
.close-trade { position: absolute; right: 5px; top: 7px; color: #777; }
.close-trade svg { width: 12px; height: 12px; }
.c-order { width: 186px; }
.c-time { width: 260px; }
.c-type, .c-symbol { width: 130px; }
.c-size { width: 101px; }
.c-num { width: 144px; }
.terminal-tabs .tab { padding: 0 12px; }
.terminal-tabs .tab:not(.active) { padding-left: 13px; }
.tab sub { margin-left: 5px; color: #f02020; font-size: 12px; font-weight: 700; line-height: 0; }

/* Status bar */
.status { display: grid; grid-template-columns: 1024px 150px 131px 89px 89px 85px 87px 84px 1fr; height: 21px; padding-top: 6px; border-bottom: 1px solid #a0acb8; overflow: hidden; }
.status span { height: 24px; padding-left: 6px; border-left: 1px solid #a0a0a0; }
.status .help { border: 0; padding-left: 2px; }
.status .traffic { display: flex; gap: 5px; padding-left: 4px; }
.traffic svg { margin-top: 2px; }
.desktop { height: 9px; background: linear-gradient(90deg, #d8dce8, #d6e4f0 20%, #d4e2f0 50%, #e2e0dc 65%, #d4e4f2); }
```
FILE: app.js
```js
const NS = "http://www.w3.org/2000/svg";

function add(parent, name, attrs, text) {
  const el = document.createElementNS(NS, name);
  for (const key in attrs) el.setAttribute(key, attrs[key]);
  if (text !== undefined) el.textContent = text;
  parent.appendChild(el);
  return el;
}

// Candles: [bar index, falling, body top, body bottom, high, low]
const candles = [
  [0,1,316,350,298,411],[1,0,311,347,296,384],[2,0,285,310,279,315],[3,0,285,288,272,299],[4,1,283,371,279,374],
  [5,0,344,369,335,424],[6,0,329,343,289,437],[7,0,292,328,272,336],[8,1,436,485,416,498],[9,0,477,483,473,522],
  [10,1,475,478,381,505],[11,0,421,481,377,496],[12,0,346,419,320,435],[13,0,255,350,246,374],[14,1,239,262,220,295],
  [15,1,263,295,255,306],[16,0,220,293,180,295],[17,1,222,245,189,275],[18,0,206,242,198,260],[19,1,204,299,171,306],
  [20,0,279,304,265,315],[21,0,246,282,241,293],[22,1,244,293,244,293],[37,1,640,724,620,732],[38,0,660,722,640,722],
  [40,0,640,660,620,725],[78,1,351,358,351,358],[79,0,305,356,257,413],[80,0,268,304,252,319],[81,1,270,323,265,325],
  [82,0,314,325,283,347],[83,1,311,336,289,350],[84,1,338,391,322,417],[85,1,388,411,355,417],[86,0,410,413,397,419],
  [87,0,386,409,379,419],[88,1,388,406,386,435],[89,1,408,463,394,489],[91,1,462,476,410,496],[92,0,471,487,451,487],
  [93,0,442,470,442,474],[94,1,445,492,436,505],[95,1,493,503,480,535],[96,0,495,505,434,507],[97,1,497,513,473,524],
  [98,0,523,540,510,566],[99,0,506,522,491,535],[100,1,508,546,493,559],[101,1,543,577,536,596],[102,1,574,642,563,642]
];
const average = [
  "193,297 209,295 221,293 230,291 246,291 262,293 275,293 300,299 311,306 336,332 354,350 369,360 379,363 391,363 401,359 417,354 433,351 465,344 481,333 497,329 513,326 529,322 545,309 554,305",
  "1433,373 1443,372 1457,366 1473,356 1489,351 1505,343 1521,337 1537,330 1553,338 1569,344 1585,350 1601,354 1617,362 1633,370 1649,379 1665,387 1681,396 1697,412 1729,439 1745,451 1761,460 1777,468 1793,477 1809,490 1825,507"
];
const macd = [806,805,803,801,802,801,800,798,801,804,805,805,801,795,791,788,783,780,777,777,776,775,775,777,780,782,785,788,789,791,793,795,795,797,802,803,806,810,810,811,811,808,804,800,797,795,792,788,785,781,779,776,775,776,776,780,782,783,786,785,781,774,769,767,764,763,762,761,762,762,764,760,758,756,756,756,756,757,758,757,755,756,756,758,760,763,766,767,768,772,775,777,779,779,781,783,784,785,786,786,787,789,792];
const signal = "193,810 211,808 229,806 257,804 304,802 386,802 418,799 450,796 482,791 514,785 540,780 557,778 577,777 610,777 641,780 671,783 693,787 721,789 746,794 781,798 816,802 846,805 872,806 912,805 947,800 977,793 1004,788 1034,783 1071,778 1122,778 1152,779 1192,779 1209,777 1226,776 1250,772 1274,768 1300,765 1345,762 1392,759 1440,758 1488,756 1510,756 1541,758 1602,761 1646,767 1694,773 1729,777 1764,780 1795,782 1823,785";
const days = ["5 Mar 2026","6 Mar 16:00","9 Mar 16:00","10 Mar 16:00","11 Mar 16:00","12 Mar 16:00","13 Mar 16:00","16 Mar 16:00","17 Mar 16:00","18 Mar 16:00","19 Mar 16:00","20 Mar 16:00","23 Mar 16:00","24 Mar 16:00","25 Mar 16:00","26 Mar 16:00","27 Mar 16:00","30 Mar 16:00"];
const barX = i => 193 + 16 * i;

function drawChart() {
  const g = add(document.getElementById("chart"), "g", { transform: "translate(-190 -133)", "shape-rendering": "crispEdges" });
  add(g, "path", { d: "M192.5 749.500V135.500H1862.500V749.500ZM192.500 813.500V751.500H1862.500V813.500Z", fill: "none", stroke: "#fff" });
  add(g, "path", { d: "M193 641.500H1862", stroke: "#708090" });
  for (const points of average) add(g, "polyline", { points, fill: "none", stroke: "#f00" });
  for (const [i, falling, top, bottom, high, low] of candles) {
    const x = barX(i);
    const left = i ? x - 5 : x;
    add(g, "rect", { x, y: high, width: 1, height: low - high, fill: "#fff" });
    add(g, "rect", { x: left, y: top, width: x + 6 - left, height: bottom - top, fill: "#fff" });
    add(g, "rect", { x: left + (i ? 1 : 0), y: top + 1, width: x + 5 - left - (i ? 1 : 0), height: bottom - top - 2, fill: falling ? "#f00" : "#008000" });
  }
  add(g, "path", { d: "M1633.500 416V470M1628 460.500H1639", stroke: "#0f0" });

  macd.forEach((y, i) => add(g, "rect", { x: barX(i) - (i ? 1 : 0), y: Math.min(y, 773), width: 2, height: Math.max(Math.abs(y - 773), 1), fill: "#c0c0c0" }));
  add(g, "polyline", { points: signal, fill: "none", stroke: "#f00", "stroke-dasharray": "3 3" });

  const label = (x, y, text, fill = "#fff") => add(g, "text", { x, y, fill }, text);
  for (let k = 0; k < 11; k++) {
    const y = Math.round(181 + 54.6 * k);
    add(g, "rect", { x: 1863, y: y - 1, width: 2, height: 1, fill: "#fff" });
    label(1869, y + 4, (1.166 - 0.0025 * k).toFixed(4));
  }
  add(g, "rect", { x: 1864, y: 634, width: 400, height: 14, fill: "#fff" });
  label(1869, 646, "1.1449", "#000");
  label(1866, 765, "0.00239");
  label(1866, 778, "0.00");
  label(1866, 810, "-0.00465");
  days.forEach((day, k) => {
    add(g, "rect", { x: 193 + 96 * k, y: 814, width: 1, height: 3, fill: "#fff" });
    label(192 + 96 * k, 829, day);
  });
  label(197, 150, "EURUSD,H4");
  label(269, 150, "1.1480 1.1485 1.1449 1.1449");
  label(197, 767, "MACD(12,26,9) -0.00217 -0.00140");
}

// Ask ticks in thirds of a pixel; the bid runs a fixed spread below
const ask = [84,458,88,400,91,370,94,465,97,570,100,585,103,572,108,605,113,658,117,640,121,587,124,615,128,595,133,570,137,628,140,643,143,628,147,643,151,628,155,643,158,628,161,600,164,475,167,370,170,357,173,380,176,340,180,357,184,340,188,370,191,340,195,355,198,340,201,355,204,292,208,268,212,283,215,268,219,288,223,320,225,418,228,515,232,527,236,515,239,527,242,513,246,585,250,558,256,572,262,557,267,540,271,557,276,570,281,548,286,530,290,557,294,543,298,565,302,515,306,540,310,545,315,570,320,555,325,585,330,570,335,585,340,572,344,585,347,558,350,572,353,650,357,655,362,700,366,700,370,735,373,735,377,775,381,745,385,757,390,745,395,742,399,690,404,672,406,690,410,628,417,587,424,585,430,555,436,557,441,540,443,557,446,543,450,600,455,640,460,688,466,657,471,690,475,735,481,775,486,745,490,742,497,715,508,715,514,688,519,713,523,715,529,815,535,787,541,820,546,885,550,875,564,875,567,930,570,990,574,960,579,860,584,845,588,832,595,832,600,860,607,885,612,875,619,903,623,875,629,860,635,848,640,860,646,858,650,915,654,932,658,905,662,875,668,888,674,918,680,917,685,918,690,880,697,875,703,917,708,880,715,872,721,885,726,860,731,872,736,860,740,880,744,855,748,848,751,858,754,990,758,965,763,975,767,962,772,1003,776,975,783,1012,788,1005,792,1018,796,1005,802,1047,810,1050,814,1050,818,1090,823,1118,826,1095,830,1105,930,1105];

function drawTicks() {
  const g = add(document.getElementById("ticks"), "g", { transform: "translate(-25 -71)", "shape-rendering": "crispEdges" });
  let grid = "";
  for (let k = 0; k < 12; k++) grid += `M28 ${84.5 + 32 * k}H310`;
  for (let k = 0; k < 8; k++) grid += `M${60.5 + 32 * k} 75V469`;
  add(g, "path", { d: grid, stroke: "#c0c0c0", "stroke-dasharray": "4 3" });
  add(g, "rect", { x: 27.5, y: 74.5, width: 283, height: 395, fill: "none", stroke: "#000" });
  const line = (shift, min, stroke) => {
    let points = "";
    for (let i = 0; i < ask.length; i += 2) points += `${Math.round(ask[i] / 3)},${Math.max(Math.round((ask[i + 1] + shift) / 3), min)} `;
    add(g, "polyline", { points, fill: "none", stroke });
  };
  line(0, 0, "#ff6060");
  line(246, 176, "#0060ff");
  add(g, "text", { x: 30, y: 88 }, "EURUSDp");
  ["1.14592","1.14585","1.14579","1.14572","1.14565","1.14559","1.14552","1.14545","1.14538","1.14532","1.14525","1.14518"].forEach((t, k) => {
    add(g, "rect", { x: 311, y: 84 + 32 * k, width: 2, height: 1 });
    add(g, "text", { x: 317, y: 91 + 32 * k }, t);
  });
  add(g, "text", { x: 317, y: 472 }, "1.14512");
  add(g, "rect", { x: 312, y: 363, width: 56, height: 14, fill: "#ff6060" });
  add(g, "text", { x: 317, y: 375, fill: "#fff" }, "1.14533");
  add(g, "rect", { x: 312, y: 445, width: 56, height: 14, fill: "#0060ff" });
  add(g, "text", { x: 317, y: 457, fill: "#fff" }, "1.14516");
}

drawChart();
drawTicks();
```
